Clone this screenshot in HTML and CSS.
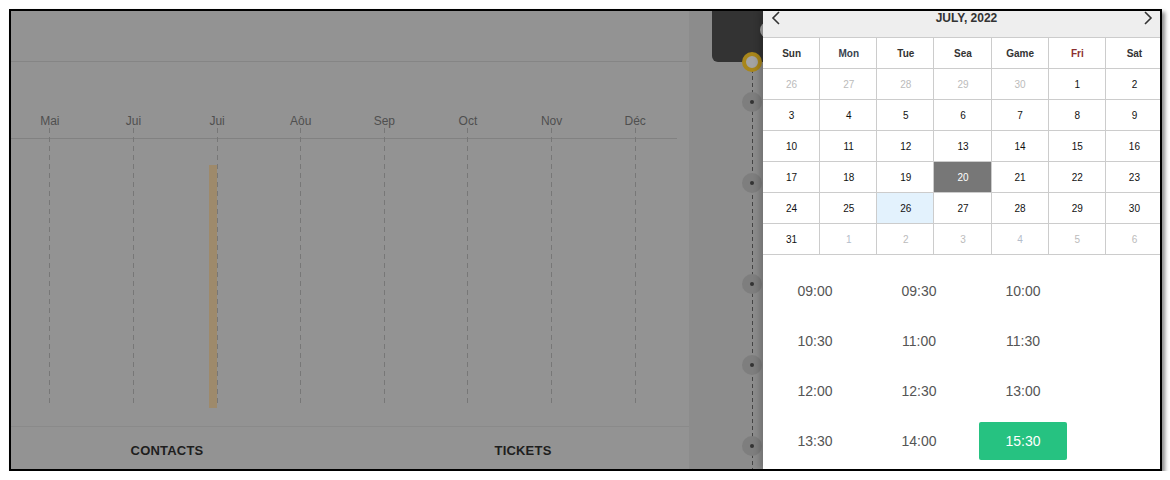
FILE: index.html
```html
<!DOCTYPE html>
<html>
<head>
    <meta charset="UTF-8">
    <title>Schedule</title>
    <link rel="stylesheet" href="styles.css">
</head>
<body>
    <div class="frame">
        <div class="main">
            <div class="topbar"></div>
            <div class="chart">
                <div class="months">
                    <div class="month"><span>Mai</span><i class="tick"></i></div>
                    <div class="month"><span>Jui</span><i class="tick"></i></div>
                    <div class="month"><span>Jui</span><i class="tick"></i><b class="bar"></b></div>
                    <div class="month"><span>Aôu</span><i class="tick"></i></div>
                    <div class="month"><span>Sep</span><i class="tick"></i></div>
                    <div class="month"><span>Oct</span><i class="tick"></i></div>
                    <div class="month"><span>Nov</span><i class="tick"></i></div>
                    <div class="month"><span>Déc</span><i class="tick"></i></div>
                </div>
            </div>
            <div class="tabs">
                <div class="tab tab-contacts">CONTACTS</div>
                <div class="tab tab-tickets">TICKETS</div>
            </div>
        </div>

        <div class="timeline">
            <div class="darkbox"><span class="ghost"></span></div>
            <div class="nodes">
                <span class="node current"></span>
                <span class="node"></span>
                <span class="node"></span>
                <span class="node"></span>
                <span class="node"></span>
                <span class="node"></span>
            </div>
        </div>

        <div class="calendar">
            <div class="cal-head">
                <svg class="arrow" width="12" height="14" viewBox="0 0 12 14"><path d="M8 1 L2 7 L8 13" fill="none" stroke="#333" stroke-width="1.6"/></svg>
                <span class="cal-title">JULY, 2022</span>
                <svg class="arrow" width="12" height="14" viewBox="0 0 12 14"><path d="M4 1 L10 7 L4 13" fill="none" stroke="#333" stroke-width="1.6"/></svg>
            </div>
            <div class="cal-grid">
                <div class="dn">Sun</div><div class="dn mon">Mon</div><div class="dn">Tue</div><div class="dn">Sea</div><div class="dn">Game</div><div class="dn fri">Fri</div><div class="dn">Sat</div>

                <div class="d other">26</div><div class="d other">27</div><div class="d other">28</div><div class="d other">29</div><div class="d other">30</div><div class="d">1</div><div class="d">2</div>
                <div class="d">3</div><div class="d">4</div><div class="d">5</div><div class="d">6</div><div class="d">7</div><div class="d">8</div><div class="d">9</div>
                <div class="d">10</div><div class="d">11</div><div class="d">12</div><div class="d">13</div><div class="d">14</div><div class="d">15</div><div class="d">16</div>
                <div class="d">17</div><div class="d">18</div><div class="d">19</div><div class="d selected">20</div><div class="d">21</div><div class="d">22</div><div class="d">23</div>
                <div class="d">24</div><div class="d">25</div><div class="d today">26</div><div class="d">27</div><div class="d">28</div><div class="d">29</div><div class="d">30</div>
                <div class="d">31</div><div class="d other next">1</div><div class="d other">2</div><div class="d other">3</div><div class="d other next">4</div><div class="d other">5</div><div class="d other">6</div>
            </div>
            <div class="slots">
                <div class="slot">09:00</div><div class="slot">09:30</div><div class="slot">10:00</div>
                <div class="slot">10:30</div><div class="slot">11:00</div><div class="slot">11:30</div>
                <div class="slot">12:00</div><div class="slot">12:30</div><div class="slot">13:00</div>
                <div class="slot">13:30</div><div class="slot">14:00</div><div class="slot active">15:30</div>
            </div>
        </div>
    </div>
</body>
</html>
```

FILE: styles.css
```css
body {
    margin: 0;
    background: #fff;
    font-family: "Liberation Sans", Arial, sans-serif;
}
.frame {
    margin: 9px 0 0 9px;
    width: 1149px;
    height: 458px;
    border: 2px solid #000;
    box-shadow: 3px 3px 4px rgba(0, 0, 0, 0.45);
    display: flex;
    overflow: hidden;
}

/* left dimmed panel */
.main {
    width: 678px;
    flex: none;
    background: #939393;
    display: flex;
    flex-direction: column;
    overflow: hidden;
}
.topbar {
    height: 50px;
    border-bottom: 1px solid #858585;
}
.chart {
    height: 364px;
}
.months {
    margin: 52px 0 0 -3px;
    width: 669px;
    display: grid;
    grid-template-columns: repeat(8, 1fr);
    background: linear-gradient(#818181, #818181) no-repeat 3px 24px / 667px 1px;
}
.month {
    position: relative;
    display: flex;
    flex-direction: column;
    align-items: center;
    font-size: 12px;
    line-height: 14px;
    color: #4f4f4f;
}
.tick {
    display: block;
    width: 1px;
    height: 277px;
    background: repeating-linear-gradient(to bottom, #777 0 5px, transparent 5px 9px);
}
.bar {
    position: absolute;
    top: 51px;
    left: calc(50% - 8px);
    width: 8px;
    height: 243px;
    background: #9e8a6b;
}
.tabs {
    border-top: 1px solid #8a8a8a;
    height: 42px;
    display: flex;
    align-items: center;
}
.tab {
    flex: none;
    text-align: center;
    font-size: 13px;
    font-weight: bold;
    letter-spacing: 0.2px;
    color: #1e1e1e;
    padding-top: 4px;
}
.tab-contacts { width: 312px; }
.tab-tickets { width: 400px; }

/* timeline column */
.timeline {
    width: 74px;
    flex: none;
    position: relative;
    background:
        repeating-linear-gradient(to bottom, #444 0 4px, transparent 4px 7px) no-repeat 63px 51px / 1px 420px,
        #8c8c8c;
}
.darkbox {
    position: absolute;
    top: 0;
    right: 0;
    width: 51px;
    height: 51px;
    background: #333;
    border-bottom-left-radius: 6px;
    z-index: 1;
}
.ghost {
    position: absolute;
    top: 11px;
    right: -13px;
    width: 16px;
    height: 16px;
    border-radius: 50%;
    background: #a6a6a6;
}
.nodes {
    display: flex;
    flex-direction: column;
    padding-left: 53px;
}
.node {
    width: 20px;
    height: 20px;
    box-sizing: border-box;
    border-radius: 50%;
    background: #7e7e7e;
    display: flex;
    align-items: center;
    justify-content: center;
    position: relative;
    z-index: 2;
}
.node::after {
    content: "";
    width: 4px;
    height: 4px;
    border-radius: 50%;
    background: #333;
}
.node.current {
    margin-top: 41px;
    border: 4px solid #a8861b;
    background: #a3a3a3;
}
.node.current::after { display: none; }
.node:nth-child(2) { margin-top: 20px; }
.node:nth-child(3) { margin-top: 61px; }
.node:nth-child(4) { margin-top: 81px; }
.node:nth-child(5) { margin-top: 61px; }
.node:nth-child(6) { margin-top: 61px; }

/* calendar */
.calendar {
    width: 397px;
    flex: none;
    background: #fff;
    position: relative;
    z-index: 3;
    box-shadow: -4px 0 6px rgba(0, 0, 0, 0.18);
    overflow: hidden;
}
.cal-head {
    height: 26px;
    background: #eee;
    border-bottom: 1px solid #ccc;
    display: flex;
    align-items: flex-start;
    justify-content: space-between;
    padding: 0 7px 0 8px;
}
.cal-title {
    font-size: 12px;
    font-weight: bold;
    color: #333;
    line-height: 13px;
    padding: 1px 0 0 9px;
}
.cal-grid {
    width: 400px;
    display: grid;
    grid-template-columns: repeat(7, 1fr);
    font-size: 10px;
}
.cal-grid > div {
    height: 30px;
    border-right: 1px solid #ccc;
    border-bottom: 1px solid #ccc;
    display: flex;
    align-items: center;
    justify-content: center;
    color: #111;
    padding-left: 1px;
}
.cal-grid .dn {
    font-weight: bold;
    color: #333;
}
.cal-grid .mon { color: #38424f; }
.cal-grid .fri { color: #8a2f2f; }
.cal-grid .other { color: #bbb; }
.cal-grid .next { color: #b4bccb; }
.cal-grid .selected {
    background: #777;
    color: #fff;
}
.cal-grid .today { background: #e3f2fd; }

.slots {
    display: grid;
    grid-template-columns: repeat(3, 104px);
    row-gap: 12px;
    padding-top: 17px;
}
.slot {
    justify-self: center;
    width: 88px;
    height: 38px;
    display: flex;
    align-items: center;
    justify-content: center;
    font-size: 14px;
    color: #555;
    border-radius: 2px;
}
.slot.active {
    background: #26c281;
    color: #fff;
}
```
